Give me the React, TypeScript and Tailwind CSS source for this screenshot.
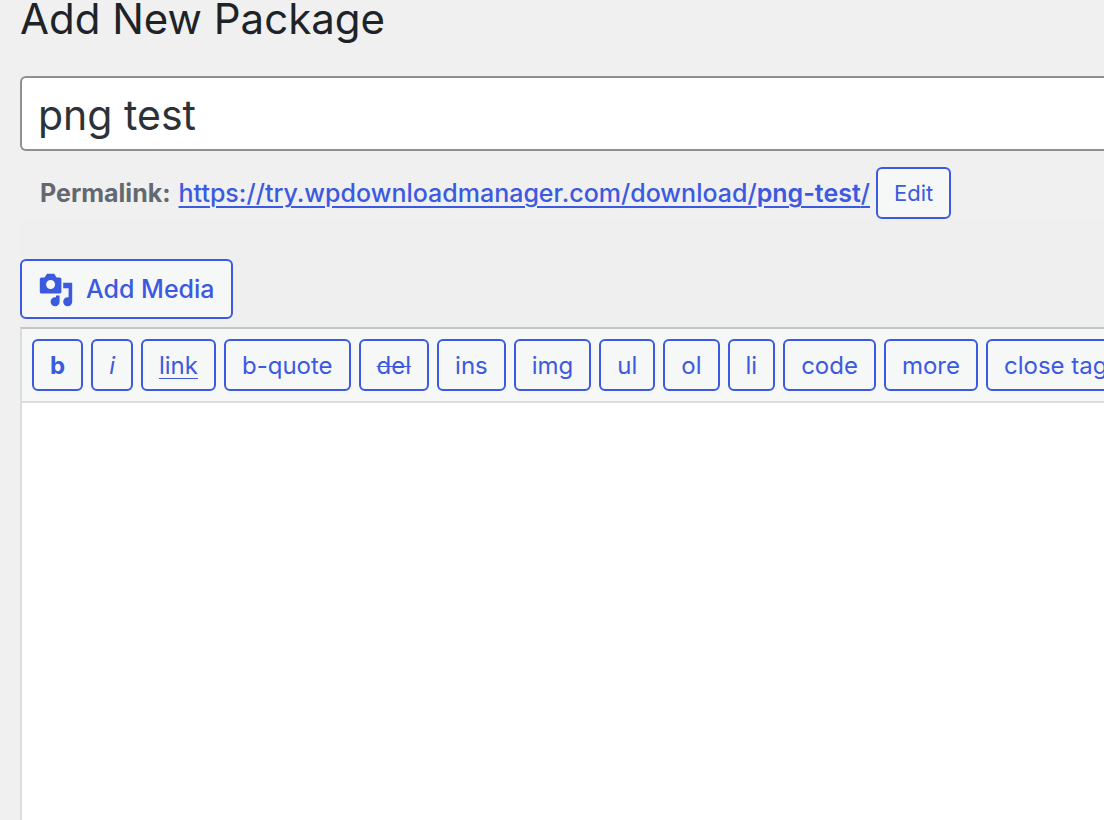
import { useState } from "react";
import type { ReactNode } from "react";

const font = "font-['Inter','Liberation_Sans',sans-serif]";
const outlined =
  "shrink-0 whitespace-nowrap rounded-md border-2 border-[#3c5ae0] bg-[#f6f7f7] text-[#3c5ae0]";

const tags: { id: string; label: ReactNode; style: string }[] = [
  { id: "strong", label: "b", style: "font-bold" },
  { id: "em", label: "i", style: "italic" },
  {
    id: "link",
    label: "link",
    style: "underline decoration-1 underline-offset-4",
  },
  { id: "block", label: "b-quote", style: "" },
  { id: "del", label: "del", style: "line-through decoration-1" },
  { id: "ins", label: "ins", style: "" },
  { id: "img", label: "img", style: "" },
  { id: "ul", label: "ul", style: "" },
  { id: "ol", label: "ol", style: "" },
  { id: "li", label: "li", style: "" },
  { id: "code", label: "code", style: "" },
  { id: "more", label: "more", style: "" },
  { id: "close", label: "close tags", style: "" },
];

function MediaIcon() {
  return (
    <svg viewBox="0 0 20 20" className="size-9 fill-current" aria-hidden="true">
      <path d="M13 11V4c0-.55-.45-1-1-1h-1.67L9 1H5L3.67 3H2c-.55 0-1 .45-1 1v7c0 .55.45 1 1 1h10c.55 0 1-.45 1-1zM7 4.5c1.38 0 2.5 1.12 2.5 2.5S8.38 9.5 7 9.5 4.5 8.38 4.5 7 5.62 4.5 7 4.5zM14 6h5v10.5c0 1.38-1.12 2.5-2.5 2.5S14 17.88 14 16.5s1.12-2.5 2.5-2.5c.17 0 .34.02.5.05V9h-3V6zm-4 8.05V13h2v3.5c0 1.38-1.12 2.5-2.5 2.5S7 17.88 7 16.5 8.12 14 9.5 14c.17 0 .34.02.5.05z" />
    </svg>
  );
}

export default function App() {
  const [title, setTitle] = useState("png test");
  const [content, setContent] = useState("");

  return (
    <main
      className={`flex min-h-screen flex-col overflow-hidden bg-[#f0f0f1] pl-5 ${font}`}
    >
      <h1 className="h-[76px] text-[42px] leading-[38px] text-[#1d2327]">
        Add New Package
      </h1>
      <input
        type="text"
        aria-label="Title"
        value={title}
        onChange={(e) => setTitle(e.target.value)}
        className="h-[75px] w-full rounded-l-md border-2 border-r-0 border-[#8c8f94] bg-white px-4 pt-0.5 text-[41px] text-[#2c3338] outline-none"
      />
      <div className="flex items-center pt-4 pl-5 text-[25px] leading-[50px] whitespace-nowrap">
        <strong className="mr-2 font-bold text-[#646970]">Permalink:</strong>
        <a
          href="#permalink"
          className="mr-1.5 font-medium text-[#3c5ae0] underline decoration-2 underline-offset-4"
        >
          https://try.wpdownloadmanager.com/download/
          <span className="font-semibold">png-test</span>/
        </a>
        <button type="button" className={`h-[52px] px-4 text-[22px] leading-6 ${outlined}`}>
          Edit
        </button>
      </div>
      <section className="flex flex-1 flex-col bg-[#efefef] pt-10">
        <div className="flex pb-2">
          <button
            type="button"
            className={`flex h-[60px] items-center gap-3 px-4 pt-0.5 text-[25px] font-medium ${outlined}`}
          >
            <MediaIcon />
            Add Media
          </button>
        </div>
        <div className="flex flex-1 flex-col border-t-2 border-l-2 border-t-[#c3c4c7] border-l-[#dcdcde]">
          <div className="flex gap-2 border-b-2 border-[#dcdcde] bg-[#f6f7f7] p-2.5">
            {tags.map((tag) => (
              <button
                key={tag.id}
                type="button"
                className={`h-[52px] px-4 pt-0.5 text-2xl ${outlined} ${tag.style}`}
              >
                {tag.label}
              </button>
            ))}
          </div>
          <textarea
            aria-label="Content"
            value={content}
            onChange={(e) => setContent(e.target.value)}
            className="block w-full flex-1 resize-none bg-white p-5 text-[26px] text-[#2c3338] outline-none"
          />
        </div>
      </section>
    </main>
  );
}
